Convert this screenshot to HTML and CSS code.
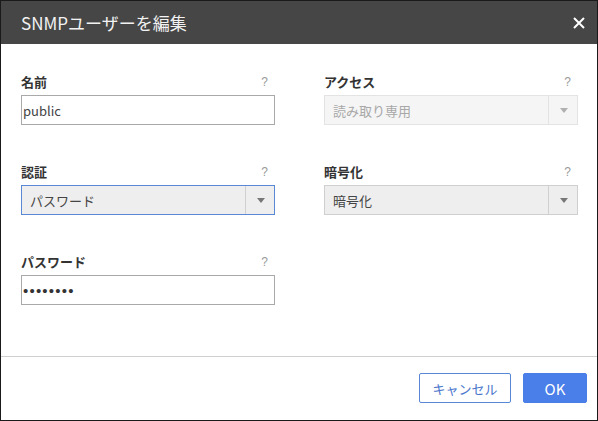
FILE: index.html
```html
<!DOCTYPE html>
<html lang="ja">
<head>
<meta charset="utf-8">
<title>SNMPユーザーを編集</title>
<link rel="stylesheet" href="styles.css">
</head>
<body>
<div class="dialog">
  <div class="header">
    <span class="title">SNMPユーザーを編集</span>
    <svg class="close" width="12" height="12" viewBox="0 0 12 12"><path d="M1 1 L11 11 M11 1 L1 11" stroke="#fff" stroke-width="2" fill="none"/></svg>
  </div>
  <div class="body">
    <div class="field">
      <div class="label-row"><span class="label">名前</span><span class="help">?</span></div>
      <div class="input">public</div>
    </div>
    <div class="field">
      <div class="label-row"><span class="label">アクセス</span><span class="help">?</span></div>
      <div class="select disabled"><span class="value">読み取り専用</span><span class="arrow"></span></div>
    </div>
    <div class="field">
      <div class="label-row"><span class="label">認証</span><span class="help">?</span></div>
      <div class="select focused"><span class="value">パスワード</span><span class="arrow"></span></div>
    </div>
    <div class="field">
      <div class="label-row"><span class="label">暗号化</span><span class="help">?</span></div>
      <div class="select"><span class="value">暗号化</span><span class="arrow"></span></div>
    </div>
    <div class="field">
      <div class="label-row"><span class="label">パスワード</span><span class="help">?</span></div>
      <div class="input"><span class="dots">••••••••</span></div>
    </div>
  </div>
  <div class="footer">
    <button class="btn cancel">キャンセル</button>
    <button class="btn ok">OK</button>
  </div>
</div>
</body>
</html>
```
FILE: styles.css
```css
* { box-sizing: border-box; }
html, body { margin: 0; padding: 0; background: #fff; }
body { font-family: "Noto Sans CJK JP", "Noto Sans", sans-serif; }
.dialog {
  width: 598px;
  height: 421px;
  border: 1px solid #1a1a1a;
  display: flex;
  flex-direction: column;
  background: #fff;
}
.header {
  height: 43px;
  background: #464646;
  display: flex;
  align-items: center;
  justify-content: space-between;
  padding: 0 12px 0 20px;
  flex: none;
}
.title {
  color: #f2f2f2;
  font-size: 17px;
  line-height: 20px;
}
.close { display: block; }
.body {
  flex: 1;
  padding: 29px 19px 0 20px;
  display: grid;
  grid-template-columns: 254px 254px;
  column-gap: 49px;
  row-gap: 38px;
  align-content: start;
}
.label-row {
  height: 18px;
  margin-bottom: 4px;
  display: flex;
  justify-content: space-between;
  align-items: center;
  padding-right: 7px;
}
.label {
  font-size: 13px;
  font-weight: bold;
  color: #333;
  line-height: 18px;
}
.help {
  font-size: 12px;
  color: #999;
  font-family: "Liberation Sans", sans-serif;
}
.input {
  height: 30px;
  border: 1px solid #a9a9a9;
  padding-left: 1px;
  display: flex;
  align-items: center;
  font-size: 13px;
  color: #444;
}
.dots {
  font-family: "Liberation Sans", sans-serif;
  font-size: 15px;
  letter-spacing: 1.2px;
  color: #333;
}
.select {
  height: 30px;
  border: 1px solid #cfcfcf;
  background: #eeeeee;
  display: flex;
  align-items: stretch;
  font-size: 13px;
  color: #444;
}
.select .value {
  flex: 1;
  display: flex;
  align-items: center;
  padding-left: 8px;
}
.select .arrow {
  width: 29px;
  border-left: 1px solid #d0d0d0;
  position: relative;
}
.select .arrow::after {
  content: "";
  position: absolute;
  left: 11px;
  top: 12px;
  border-left: 4px solid transparent;
  border-right: 4px solid transparent;
  border-top: 5px solid #777;
}
.select.focused { border-color: #5b88d6; }
.select.disabled {
  background: #f5f5f5;
  border-color: #e3e3e3;
  color: #a8a8a8;
}
.select.disabled .arrow { border-left-color: #e3e3e3; }
.select.disabled .arrow::after { border-top-color: #b0b0b0; }
.footer {
  flex: none;
  height: 64px;
  border-top: 1px solid #d0d0d0;
  display: flex;
  justify-content: flex-end;
  align-items: flex-start;
  padding: 16px 10px 0 0;
  gap: 12px;
}
.btn {
  height: 30px;
  font-family: "Noto Sans CJK JP", "Noto Sans", sans-serif;
  font-size: 13px;
  border-radius: 2px;
  padding: 0;
  cursor: pointer;
}
.cancel {
  width: 92px;
  background: #fff;
  border: 1px solid #5a86d6;
  color: #4a76cc;
}
.ok {
  width: 64px;
  background: #4a7ee8;
  border: 1px solid #4a7ee8;
  color: #fff;
  font-size: 15px;
}
```
